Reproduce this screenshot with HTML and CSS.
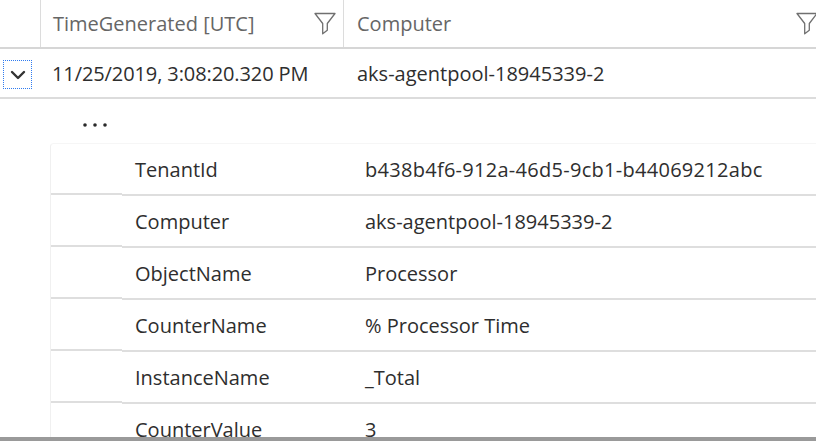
FILE: index.html
```html
<!DOCTYPE html>
<html lang="en">
<head>
<meta charset="utf-8">
<title>Log results</title>
<link rel="stylesheet" href="styles.css">
</head>
<body>
<div class="page">
  <div class="grid-area">
    <div class="header">
      <div class="hcell expander"></div>
      <div class="hcell col-time">
        <span class="htext">TimeGenerated [UTC]</span>
        <svg class="filter" width="22" height="23" viewBox="0 0 22 23"><path d="M1 1.5 H21 L13.3 11.5 V18.2 L8.7 21.8 V11.5 Z" fill="none" stroke="#707070" stroke-width="1.3" stroke-linejoin="round"/></svg>
      </div>
      <div class="hcell col-computer">
        <span class="htext">Computer</span>
        <svg class="filter" width="22" height="23" viewBox="0 0 22 23"><path d="M1 1.5 H21 L13.3 11.5 V18.2 L8.7 21.8 V11.5 Z" fill="none" stroke="#707070" stroke-width="1.3" stroke-linejoin="round"/></svg>
      </div>
    </div>
    <div class="row">
      <div class="cell expander">
        <span class="chev-box">
          <svg width="16" height="10" viewBox="0 0 16 10"><path d="M2 2 L8 8 L14 2" fill="none" stroke="#333" stroke-width="2.4" stroke-linecap="round" stroke-linejoin="round"/></svg>
        </span>
      </div>
      <div class="cell col-time">11/25/2019, 3:08:20.320 PM</div>
      <div class="cell col-computer">aks-agentpool-18945339-2</div>
    </div>
    <div class="details">
      <div class="more">
        <svg width="26" height="6" viewBox="0 0 26 6"><circle cx="3" cy="3" r="1.8" fill="#2a2a2a"/><circle cx="13" cy="3" r="1.8" fill="#2a2a2a"/><circle cx="23" cy="3" r="1.8" fill="#2a2a2a"/></svg>
      </div>
      <div class="props">
        <div class="prop"><div class="pspace"></div><div class="pkey">TenantId</div><div class="pval guid">b438b4f6-912a-46d5-9cb1-b44069212abc</div></div>
        <div class="prop"><div class="pspace"></div><div class="pkey">Computer</div><div class="pval">aks-agentpool-18945339-2</div></div>
        <div class="prop"><div class="pspace"></div><div class="pkey">ObjectName</div><div class="pval">Processor</div></div>
        <div class="prop"><div class="pspace"></div><div class="pkey">CounterName</div><div class="pval">% Processor Time</div></div>
        <div class="prop"><div class="pspace"></div><div class="pkey">InstanceName</div><div class="pval">_Total</div></div>
        <div class="prop"><div class="pspace"></div><div class="pkey">CounterValue</div><div class="pval">3</div></div>
      </div>
    </div>
  </div>
  <div class="scrollbar"></div>
</div>
</body>
</html>
```
FILE: styles.css
```css
html, body {
  margin: 0;
  padding: 0;
  background: #ffffff;
}
.page {
  width: 816px;
  height: 441px;
  overflow: hidden;
  display: flex;
  flex-direction: column;
  font-family: "Open Sans", "Noto Sans", sans-serif;
  font-size: 20px;
  color: #2e2e2e;
}
.grid-area {
  flex: 1;
  overflow: hidden;
}
.header {
  display: flex;
  height: 47px;
  border-bottom: 2px solid #d6d6d6;
  width: 1000px;
}
.hcell {
  display: flex;
  align-items: center;
  box-sizing: border-box;
  color: #666666;
}
.expander {
  flex: 0 0 41px;
  box-sizing: border-box;
}
.hcell.expander {
  border-right: 1px solid #dcdcdc;
}
.col-time {
  flex: 0 0 303px;
  box-sizing: border-box;
  padding-left: 12px;
}
.hcell.col-time {
  border-right: 1px solid #dcdcdc;
  padding-right: 7px;
}
.col-computer {
  flex: 0 0 481px;
  box-sizing: border-box;
  padding-left: 13px;
}
.hcell.col-computer {
  padding-right: 7px;
}
.htext {
  flex: 1;
  white-space: nowrap;
}
.filter {
  flex: 0 0 auto;
  margin-top: -1px;
}
.row {
  display: flex;
  height: 48px;
  border-bottom: 2px solid #dcdcdc;
  width: 1000px;
}
.cell {
  display: flex;
  align-items: center;
  white-space: nowrap;
}
.row .col-time {
  padding-left: 11px;
  letter-spacing: -0.1px;
}
.chev-box {
  margin-left: 3px;
  width: 29px;
  height: 29px;
  box-sizing: border-box;
  border: 1px dotted #2f7bf0;
  display: flex;
  align-items: center;
  justify-content: center;
  margin-top: 2px;
}
.chev-box svg {
  margin-top: 1px;
}
.details {
  padding-left: 50px;
}
.more {
  height: 44px;
  display: flex;
  align-items: center;
  padding-left: 32px;
  box-sizing: border-box;
  padding-top: 8px;
}
.props {
  border-left: 1px solid #f0f0f0;
  border-top: 1px solid #f6f6f6;
  border-top-left-radius: 4px;
}
.prop {
  display: grid;
  grid-template-columns: 71px 230px 1fr;
  height: 52px;
}
.prop > div {
  display: flex;
  align-items: center;
  box-sizing: border-box;
  border-bottom: 2px solid #dedede;
  white-space: nowrap;
}
.prop > .pspace {
  border-bottom: none;
  box-shadow: 0 -1px 0 0 #dedede inset, 0 -2px 0 0 #dedede inset;
  margin-bottom: 1px;
}
.pkey {
  padding-left: 13px;
}
.pval {
  padding-left: 13px;
}
.guid {
  letter-spacing: 0.28px;
}
.scrollbar {
  flex: 0 0 4px;
  background: #9a9a9a;
}
```
